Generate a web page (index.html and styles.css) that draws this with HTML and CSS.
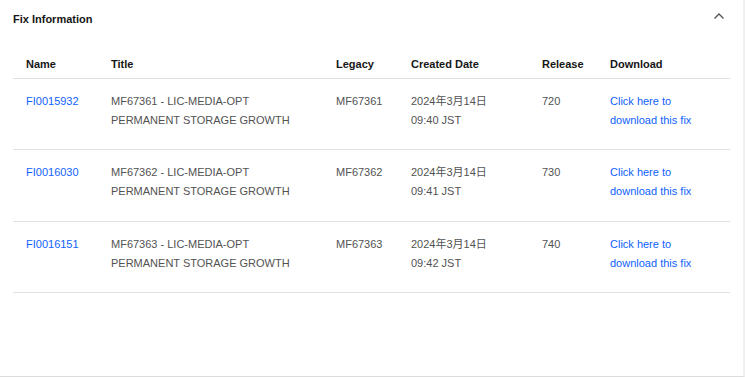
FILE: index.html
```html
<!DOCTYPE html>
<html>
<head>
<meta charset="utf-8">
<link rel="stylesheet" href="styles.css">
</head>
<body>
<div class="panel">
  <div class="panel-head">
    <h2 class="panel-title">Fix Information</h2>
    <svg class="chevron" width="12" height="8" viewBox="0 0 12 8"><path d="M1.5 6.5 L6 2 L10.5 6.5" fill="none" stroke="#525252" stroke-width="1.3"/></svg>
  </div>
  <table class="fix-table">
    <colgroup>
      <col class="c-name"><col class="c-title"><col class="c-legacy"><col class="c-date"><col class="c-rel"><col class="c-dl">
    </colgroup>
    <thead>
      <tr><th>Name</th><th>Title</th><th>Legacy</th><th>Created Date</th><th>Release</th><th>Download</th></tr>
    </thead>
    <tbody>
      <tr>
        <td><a class="link" href="#">FI0015932</a></td>
        <td>MF67361 - LIC-MEDIA-OPT<br>PERMANENT STORAGE GROWTH</td>
        <td>MF67361</td>
        <td>2024年3月14日<br>09:40 JST</td>
        <td>720</td>
        <td><a class="link" href="#">Click here to<br>download this fix</a></td>
      </tr>
      <tr>
        <td><a class="link" href="#">FI0016030</a></td>
        <td>MF67362 - LIC-MEDIA-OPT<br>PERMANENT STORAGE GROWTH</td>
        <td>MF67362</td>
        <td>2024年3月14日<br>09:41 JST</td>
        <td>730</td>
        <td><a class="link" href="#">Click here to<br>download this fix</a></td>
      </tr>
      <tr>
        <td><a class="link" href="#">FI0016151</a></td>
        <td>MF67363 - LIC-MEDIA-OPT<br>PERMANENT STORAGE GROWTH</td>
        <td>MF67363</td>
        <td>2024年3月14日<br>09:42 JST</td>
        <td>740</td>
        <td><a class="link" href="#">Click here to<br>download this fix</a></td>
      </tr>
    </tbody>
  </table>
</div>
</body>
</html>
```
FILE: styles.css
```css
html, body {
  margin: 0;
  padding: 0;
  background: #ffffff;
}
body {
  font-family: "Liberation Sans", Arial, "Noto Sans CJK JP", sans-serif;
  font-size: 11px;
  color: #525252;
}
.panel {
  box-sizing: content-box;
  width: 715px;
  height: 376px;
  padding: 0 15px 0 13px;
  border-right: 2px solid #efefef;
  border-bottom: 1px solid #dcdcdc;
}
.panel-head {
  height: 40px;
  display: flex;
  align-items: flex-start;
  justify-content: space-between;
}
.panel-title {
  margin: 12px 0 0 0;
  font-size: 11px;
  line-height: 14px;
  font-weight: 700;
  color: #161616;
}
.chevron {
  margin: 12px 3px 0 0;
}
.fix-table {
  width: 717px;
  border-collapse: collapse;
  table-layout: fixed;
}
.c-name { width: 85px; }
.c-title { width: 225px; }
.c-legacy { width: 75px; }
.c-date { width: 131px; }
.c-rel { width: 68px; }
.c-dl { width: 133px; }
.fix-table th {
  text-align: left;
  font-weight: 700;
  color: #161616;
  padding: 15px 0 4px 13px;
  line-height: 19px;
  border-bottom: 1px solid #e0e0e0;
}
.fix-table td {
  vertical-align: top;
  padding: 13px 0 19.3px 13px;
  line-height: 19px;
  border-bottom: 1px solid #e0e0e0;
  white-space: nowrap;
}
.link {
  color: #0f62fe;
  text-decoration: none;
}
```
